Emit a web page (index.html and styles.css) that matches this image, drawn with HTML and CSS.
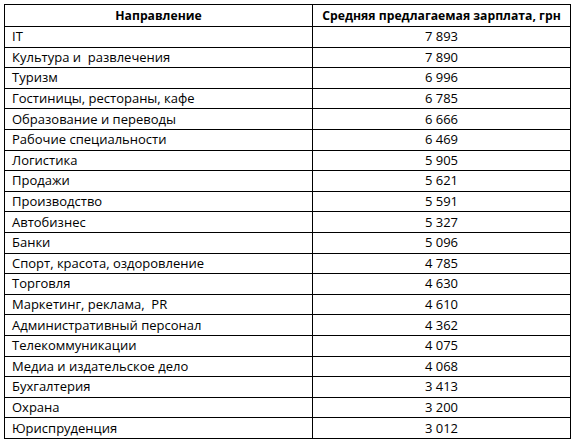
FILE: index.html
```html
<!DOCTYPE html>
<html lang="ru">
<head>
<meta charset="utf-8">
<title>Зарплаты</title>
<link rel="stylesheet" href="styles.css">
</head>
<body>
<table class="salary">
  <thead>
    <tr class="head-row">
      <th class="col-name">Направление</th>
      <th class="col-value">Средняя предлагаемая зарплата, грн</th>
    </tr>
  </thead>
  <tbody>
    <tr><td class="name">IT</td><td class="value">7 893</td></tr>
    <tr><td class="name">Культура и&nbsp; развлечения</td><td class="value">7 890</td></tr>
    <tr><td class="name">Туризм</td><td class="value">6 996</td></tr>
    <tr><td class="name">Гостиницы, рестораны, кафе</td><td class="value">6 785</td></tr>
    <tr><td class="name">Образование и переводы</td><td class="value">6 666</td></tr>
    <tr><td class="name">Рабочие специальности</td><td class="value">6 469</td></tr>
    <tr><td class="name">Логистика</td><td class="value">5 905</td></tr>
    <tr><td class="name">Продажи</td><td class="value">5 621</td></tr>
    <tr><td class="name">Производство</td><td class="value">5 591</td></tr>
    <tr><td class="name">Автобизнес</td><td class="value">5 327</td></tr>
    <tr><td class="name">Банки</td><td class="value">5 096</td></tr>
    <tr><td class="name">Спорт, красота, оздоровление</td><td class="value">4 785</td></tr>
    <tr><td class="name">Торговля</td><td class="value">4 630</td></tr>
    <tr><td class="name">Маркетинг, реклама,&nbsp; PR</td><td class="value">4 610</td></tr>
    <tr><td class="name">Административный персонал</td><td class="value">4 362</td></tr>
    <tr><td class="name">Телекоммуникации</td><td class="value">4 075</td></tr>
    <tr><td class="name">Медиа и издательское дело</td><td class="value">4 068</td></tr>
    <tr><td class="name">Бухгалтерия</td><td class="value">3 413</td></tr>
    <tr><td class="name">Охрана</td><td class="value">3 200</td></tr>
    <tr><td class="name">Юриспруденция</td><td class="value">3 012</td></tr>
  </tbody>
</table>
</body>
</html>
```

FILE: styles.css
```css
html, body {
  margin: 0;
  padding: 0;
  background: #ffffff;
}

body {
  padding: 4px 0 0 4px;
  font-family: "Open Sans", "Noto Sans", sans-serif;
  font-size: 13px;
  color: #000000;
}

.salary {
  border-collapse: separate;
  border-spacing: 0;
  border-top: 1px solid #000;
  border-left: 1px solid #000;
  width: 567px;
  table-layout: fixed;
}

.salary th,
.salary td {
  box-sizing: border-box;
  border-right: 1px solid #000;
  border-bottom: 1px solid #000;
  padding: 0 0 0 7px;
  white-space: nowrap;
  overflow: hidden;
}

.col-name {
  width: 308px;
}

.col-value {
  width: 258px;
}

.salary th {
  height: 22px;
  font-size: 12.2px;
  font-weight: bold;
  text-align: center;
  padding: 0;
}

.salary td {
  height: 20.6px;
  line-height: 19px;
}

.salary td.value {
  text-align: center;
  padding-left: 0;
}
```
